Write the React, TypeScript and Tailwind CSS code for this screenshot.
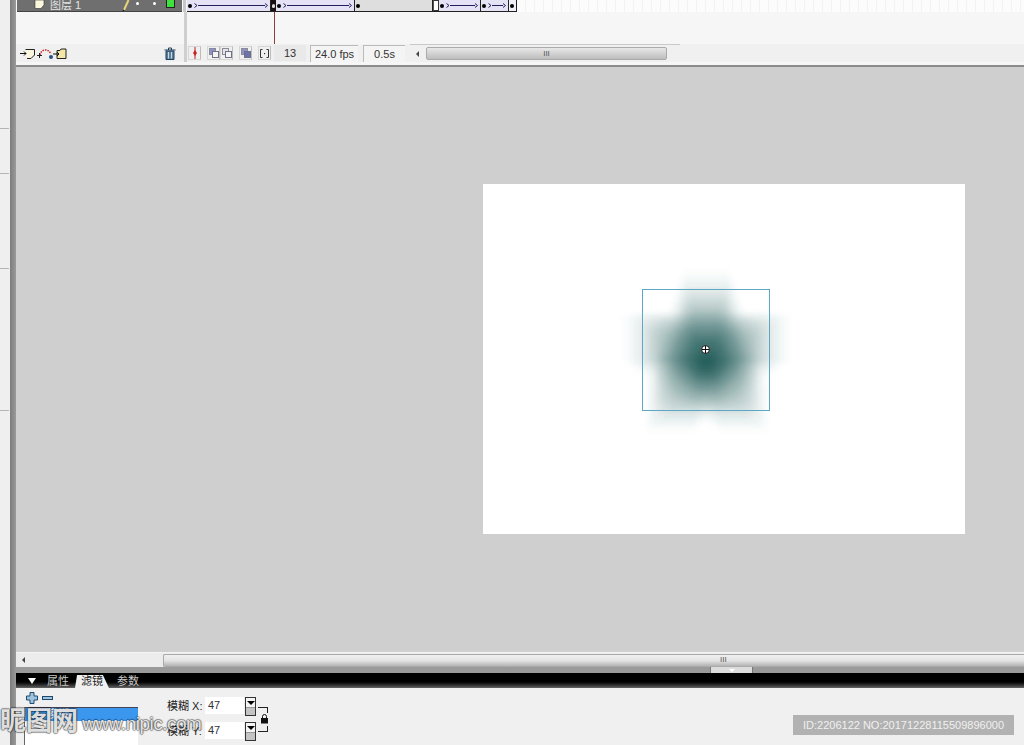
import React from "react";

const FONT = "font-['Liberation_Sans','Noto_Sans_CJK_SC',sans-serif]";

// the blurred star: box blur of a regular star, sampled into small cells
const BLUR_SIZE = 190;
const CELL = 3;
const BOX = 24;

function buildBlurCells() {
  const pts: [number, number][] = [];
  for (let i = 0; i < 10; i++) {
    const r = i % 2 === 0 ? 67 : 27;
    const a = -Math.PI / 2 + (i * Math.PI) / 5;
    pts.push([92.5 + r * Math.cos(a), 96 + r * Math.sin(a)]);
  }
  const inside = (x: number, y: number) => {
    let hit = false;
    for (let i = 0, j = pts.length - 1; i < pts.length; j = i++) {
      const [xi, yi] = pts[i];
      const [xj, yj] = pts[j];
      if (yi > y !== yj > y && x < ((xj - xi) * (y - yi)) / (yj - yi) + xi) hit = !hit;
    }
    return hit;
  };
  const n = BLUR_SIZE + 1;
  const sat = new Float32Array(n * n);
  for (let y = 1; y < n; y++) {
    for (let x = 1; x < n; x++) {
      sat[y * n + x] = (inside(x, y) ? 1 : 0) + sat[(y - 1) * n + x] + sat[y * n + x - 1] - sat[(y - 1) * n + x - 1];
    }
  }
  const cells: { x: number; y: number; o: number }[] = [];
  for (let y = 0; y < BLUR_SIZE; y += CELL) {
    for (let x = 0; x < BLUR_SIZE; x += CELL) {
      const x0 = Math.max(0, x - BOX);
      const x1 = Math.min(BLUR_SIZE, x + BOX);
      const y0 = Math.max(0, y - BOX);
      const y1 = Math.min(BLUR_SIZE, y + BOX);
      const sum = sat[y1 * n + x1] - sat[y0 * n + x1] - sat[y1 * n + x0] + sat[y0 * n + x0];
      const o = Math.pow(Math.min(1, sum / (BOX * BOX * 4)), 0.85);
      if (o > 0.004) cells.push({ x, y, o });
    }
  }
  return cells;
}

const BLUR_CELLS = buildBlurCells();

// one span in the timeline: keyframe dot, then optionally a motion arrow
const Tween = ({ w, fill = "bg-[#e4e2f4]", arrow = true }: { w: number; fill?: string; arrow?: boolean }) => (
  <div className={`h-full flex items-center shrink-0 border-r border-[#222] ${fill}`} style={{ width: w }}>
    <span className="ml-[1px] w-[4px] h-[4px] rounded-full bg-black shrink-0" />
    {arrow && (
      <>
        <svg className="ml-[2px] shrink-0" width="4" height="5" viewBox="0 0 4 5">
          <path d="M0.5 0.5L3 2.5L0.5 4.5" stroke="#20205c" fill="none" />
        </svg>
        <div className="flex-1 h-px bg-[#20205c]" />
        <svg className="mr-[2px] shrink-0" width="3" height="5" viewBox="0 0 3 5">
          <path d="M0 0.5L2.5 2.5L0 4.5" stroke="#20205c" fill="none" />
        </svg>
      </>
    )}
  </div>
);

const MiniBtn = ({ children, cls = "" }: { children: React.ReactNode; cls?: string }) => (
  <div className={`w-[13px] h-[14px] border border-[#d6d6d6] border-r-[#bdbdbd] bg-[#f0f0f0] flex items-center justify-center shrink-0 ${cls}`}>{children}</div>
);

const Onion = ({ a = "#8d93c4", b = "#f4f4f4" }: { a?: string; b?: string }) => (
  <svg width="10" height="10" viewBox="0 0 10 10">
    <rect x="0.5" y="0.5" width="6" height="6" fill={a} stroke="#8a8a9a" />
    <rect x="3.5" y="3.5" width="6" height="6" fill={b} stroke="#70708a" />
  </svg>
);

const Stepper = () => (
  <div className="ml-px w-[11px] h-[19px] border border-[#333] bg-[#c4c4c4] flex flex-col self-start shrink-0">
    <div className="h-[10px] bg-[#f4f4f4] flex items-center justify-center border-b border-[#999]">
      <span className="w-0 h-0 border-x-[4px] border-x-transparent border-t-[4px] border-t-black" />
    </div>
  </div>
);

const Field = ({ label }: { label: string }) => (
  <div className="flex items-start h-[19px]">
    <span className="w-[38px] whitespace-nowrap leading-[18px]">{label}</span>
    <div className="w-[39px] h-[17px] bg-white text-[#333] pl-[3px] leading-[17px]">47</div>
    <Stepper />
  </div>
);

export default function App() {
  return (
    <div className={`w-[1024px] h-[745px] overflow-hidden relative flex bg-[#f0f0f0] ${FONT}`}>
      {/* left strip */}
      <div className="w-[10px] shrink-0 bg-[#efefef] flex flex-col pr-px">
        <div className="h-[129px] border-b border-[#b5b5b5]" />
        <div className="h-[45px] border-b border-[#b5b5b5]" />
        <div className="h-[95px] border-b border-[#b5b5b5]" />
        <div className="h-[142px] border-b border-[#b5b5b5]" />
      </div>
      <div className="w-[6px] shrink-0 bg-gradient-to-r from-[#7d7d7d] to-[#9a9a9a]" />

      <div className="flex-1 flex flex-col min-w-0">
        {/* timeline */}
        <div className="h-[65px] bg-[#f6f6f6] flex flex-col shrink-0">
          <div className="h-[12px] flex shrink-0">
            <div className="w-[165px] ml-[1px] bg-[#6f6f6f] border-b border-[#444] flex items-start text-[11px] text-[#e4e4e4] overflow-hidden">
              <svg className="ml-[17px] shrink-0" width="11" height="9" viewBox="0 0 11 9">
                <path d="M1 0H10V5L7 8.5H1Z" fill="#fbf7dc" stroke="#333" strokeWidth="0.6" />
              </svg>
              <span className="ml-[5px] leading-[11px] w-[72px] shrink-0">图层 1</span>
              <svg className="shrink-0" width="8" height="11" viewBox="0 0 8 11">
                <path d="M6.5 0L2 10" stroke="#e6d37a" strokeWidth="2" />
                <path d="M2 10L1 11" stroke="#111" strokeWidth="1.5" />
              </svg>
              <span className="ml-[6px] mt-[2px] w-[3px] h-[3px] bg-white rounded-full shrink-0" />
              <span className="ml-[14px] mt-[2px] w-[3px] h-[3px] bg-white rounded-full shrink-0" />
              <span className="ml-[10px] w-[9px] h-[8px] bg-[#3de23d] border border-[#222] border-t-0 shrink-0" />
            </div>
            <div className="w-[3px] ml-[1px] bg-[#c8c8c8]" />
            <div className="flex-1 flex min-w-0">
              <div className="flex h-full border-b border-[#222] ml-[1px]">
                <Tween w={84} />
                <div className="w-[5px] h-full shrink-0 bg-[#1a0f0f] flex items-center justify-center">
                  <span className="w-[3px] h-[4px] rounded-full bg-[#ddd]" />
                </div>
                <Tween w={79} />
                <Tween w={78} fill="bg-[#dedede]" arrow={false} />
                <div className="w-[6px] h-full border border-[#333] border-l-[#555] bg-white shrink-0" />
                <Tween w={42} />
                <Tween w={28} />
                <Tween w={8} arrow={false} fill="bg-[#f0f0f8]" />
              </div>
              <div className="flex-1 bg-[repeating-linear-gradient(90deg,#fcfcfc_0,#fcfcfc_8px,#f2f2f2_8px,#f2f2f2_9px)]" />
            </div>
          </div>
          <div className="flex-1 flex">
            <div className="w-[168px] shrink-0" />
            <div className="w-[3px] shrink-0 bg-[#cfcfcf]" />
            <div className="flex-1 relative">
              <div className="absolute left-[87px] top-0 bottom-0 w-px bg-[#8e3c3c]" />
            </div>
          </div>
          <div className="h-[18px] mb-[3px] flex items-center shrink-0 text-[11px] text-[#333] bg-[#f0f0f0]">
            <div className="w-[168px] shrink-0 flex items-center pl-[4px]">
              <svg className="shrink-0" width="48" height="13" viewBox="0 0 48 13">
                <path d="M5.5 2.5H14.5V8L11 11.5H7" fill="#fbf7dc" stroke="#222" />
                <path d="M0 6.5H6M4 4.5l2 2-2 2" stroke="#111" fill="none" />
                <path d="M20 8C21 2 28 1 31 7" stroke="#c22" fill="none" strokeDasharray="1.5 1" strokeWidth="1.5" />
                <path d="M17 8.5H22M19.5 6V11" stroke="#222" />
                <circle cx="31" cy="10" r="2" fill="#25508a" />
                <path d="M37 3.5H40L41 2H46V11.5H37Z" fill="#f3e6a6" stroke="#222" />
                <path d="M33 7H39M37 5l2 2-2 2" stroke="#111" fill="none" />
              </svg>
              <svg className="ml-auto mr-[8px] shrink-0" width="12" height="13" viewBox="0 0 12 13">
                <path d="M0.5 3H11.5M4.5 3V1H7.5V3" stroke="#1f3f5a" fill="none" />
                <path d="M2 4H10V12.5H2Z" fill="#5c7f9a" stroke="#1f3f5a" />
                <path d="M4.5 5V11.5M7.5 5V11.5" stroke="#c9d8e4" />
              </svg>
            </div>
            <div className="w-[3px] h-full shrink-0 bg-[#cfcfcf]" />
            <MiniBtn cls="ml-[1px]">
              <svg width="6" height="12" viewBox="0 0 6 12"><path d="M3 0V12" stroke="#b02020" /><path d="M1 6L3 3L5 6L3 9Z" fill="#d02020" /></svg>
            </MiniBtn>
            <MiniBtn cls="ml-[6px]"><Onion /></MiniBtn>
            <MiniBtn cls="ml-[0px]"><Onion a="#e4e4e4" /></MiniBtn>
            <MiniBtn cls="ml-[6px]"><Onion a="#8d93c4" b="#6d72a8" /></MiniBtn>
            <MiniBtn cls="ml-[6px]">
              <svg width="9" height="9" viewBox="0 0 9 9">
                <path d="M2.5 0.5H0.5V8.5H2.5M6.5 0.5H8.5V8.5H6.5" stroke="#333" fill="none" />
                <rect x="4" y="4" width="1.2" height="1.2" fill="#333" />
              </svg>
            </MiniBtn>
            <div className="ml-[3px] w-[32px] h-[16px] bg-[#e9e9e9] text-center leading-[17px] shrink-0">13</div>
            <div className="ml-[4px] w-[48px] h-[17px] border-l border-t border-[#bbb] bg-[#f4f4f4] text-center leading-[16px] shrink-0">24.0 fps</div>
            <div className="ml-[5px] w-[42px] h-[17px] border-l border-t border-[#bbb] bg-[#f4f4f4] text-center leading-[16px] shrink-0">0.5s</div>
            <div className="ml-[5px] h-[18px] w-[270px] border-t border-[#c9c9c9] flex items-center shrink-0">
              <span className="ml-[6px] w-0 h-0 border-y-[3px] border-y-transparent border-r-[3px] border-r-[#444]" />
              <div className="ml-[7px] w-[241px] h-[13px] rounded-[2px] border border-[#aaa] bg-gradient-to-b from-[#e8e8e8] to-[#bdbdbd] flex items-center justify-center">
                <span className="text-[8px] leading-none text-[#555]">III</span>
              </div>
            </div>
          </div>
        </div>
        <div className="h-[2px] shrink-0 bg-[#8b8b8b]" />

        {/* stage */}
        <div className="flex-1 min-h-0 bg-[#cfcfcf] pl-[467px] pt-[117px]">
          <div className="w-[482px] h-[350px] bg-white pl-[159px] pt-[105px]">
            <div className="relative w-[128px] h-[122px]">
              <svg className="absolute left-[-29px] top-[-29px]" width="190" height="190" viewBox="0 0 190 190">
                <defs>
                  <filter id="soft" x="-5%" y="-5%" width="110%" height="110%">
                    <feGaussianBlur stdDeviation="2" />
                  </filter>
                </defs>
                <g filter="url(#soft)" fill="#27605d" shapeRendering="crispEdges">
                  {BLUR_CELLS.map((c) => (
                    <rect key={`${c.x}-${c.y}`} x={c.x} y={c.y} width={CELL} height={CELL} fillOpacity={c.o} />
                  ))}
                </g>
              </svg>
              <div className="absolute inset-0 border border-[#5da6c4]" />
              <svg className="absolute left-[59px] top-[56px]" width="9" height="9" viewBox="0 0 9 9">
                <circle cx="4.5" cy="4.5" r="4" fill="#fff" stroke="#111" />
                <path d="M4.5 1V8M1 4.5H8" stroke="#111" />
              </svg>
            </div>
          </div>
        </div>

        {/* horizontal scrollbar */}
        <div className="h-[15px] shrink-0 bg-[#ececec] border-t border-[#f4f4f4] flex items-center">
          <span className="ml-[6px] w-0 h-0 border-y-[3px] border-y-transparent border-r-[3px] border-r-[#444]" />
          <div className="ml-[138px] flex-1 h-[13px] rounded-l-[2px] border border-r-0 border-[#aaa] bg-gradient-to-b from-[#f0f0f0] via-[#e4e4e4] to-[#b4b4b4] flex items-center pl-[556px]">
            <span className="text-[8px] leading-none text-[#555]">III</span>
          </div>
        </div>
        <div className="h-[6px] shrink-0 bg-[#9a9a9a] pl-[694px]">
          <div className="w-[43px] h-full bg-[#dcdcdc] border-x border-[#777] flex justify-center items-end">
            <span className="mb-[1px] w-0 h-0 border-x-[3px] border-x-transparent border-t-[3px] border-t-white" />
          </div>
        </div>

        {/* tabs */}
        <div className="h-[15px] shrink-0 bg-gradient-to-b from-black from-[50%] to-[#666] flex items-end text-[11px] text-[#c8c8c8]">
          <span className="ml-[12px] mb-[4px] w-0 h-0 border-x-[4px] border-x-transparent border-t-[6px] border-t-white" />
          <span className="ml-[11px] leading-[14px]">属性</span>
          <span className="ml-[6px] w-[34px] h-[13px] bg-[#f0f0f0] text-[#222] pl-[6px] leading-[13px] [clip-path:polygon(6%_0,82%_0,100%_100%,0_100%)]">滤镜</span>
          <span className="ml-[8px] leading-[14px]">参数</span>
        </div>

        {/* filter panel */}
        <div className="h-[57px] shrink-0 flex pl-[8px] overflow-hidden">
          <div className="w-[114px] shrink-0 flex flex-col">
            <div className="h-[19px] pl-[2px] flex items-center gap-[4px] shrink-0">
              <svg width="12" height="12" viewBox="0 0 12 12">
                <path d="M4 0.5H8V4H11.5V8H8V11.5H4V8H0.5V4H4Z" fill="#9dc3de" stroke="#1c4a6e" />
              </svg>
              <span className="w-[11px] h-[4px] bg-[#9dc3de] border border-[#1c4a6e]" />
            </div>
            <div className="flex-1 bg-white border-l border-[#666]">
              <div className="h-[14px] bg-[#3b96ee] border-t border-[#445] text-white text-[11px] leading-[13px] pl-[4px] flex items-center gap-[11px]">
                <svg width="7" height="6" viewBox="0 0 7 6"><path d="M0.5 3L3 5L6.5 0.5" stroke="#2f9e55" fill="none" strokeWidth="1.2" /></svg>
                <span>模糊</span>
              </div>
            </div>
          </div>
          <div className="ml-[29px] pt-[9px] text-[11px] text-[#222] flex flex-col gap-[6px]">
            <Field label="模糊 X:" />
            <Field label="模糊 Y:" />
          </div>
          <div className="ml-[2px] mt-[19px] w-[10px] h-[25px] flex flex-col shrink-0">
            <div className="h-[6px] border-t border-r border-[#222]" />
            <svg className="ml-auto h-[13px]" width="7" height="13" viewBox="0 0 7 13">
              <rect x="0" y="5" width="7" height="5.5" fill="#111" />
              <path d="M1.5 5.5V3.5A2 2 0 0 1 5.5 3.5V5.5" stroke="#111" fill="none" />
            </svg>
            <div className="h-[6px] border-b border-r border-[#222]" />
          </div>
        </div>
      </div>

      {/* watermarks */}
      <div className="absolute left-0 top-[706px] text-[26px] leading-[30px] font-bold text-white/85 whitespace-nowrap [text-shadow:1px_0_1px_rgba(0,0,0,0.4),-1px_0_1px_rgba(0,0,0,0.4),0_1px_1px_rgba(0,0,0,0.4),0_-1px_1px_rgba(0,0,0,0.4)]">
        昵图网 <span className="ml-[-3px] text-[19px] font-normal tracking-[-0.5px]">www.nipic.com</span>
      </div>
      <div className="absolute left-[793px] top-[715px] w-[221px] h-[20px] bg-[#b2b2b2] text-[#f0f0f0] text-[11px] leading-[20px] text-center">
        ID:2206122 NO:20171228115509896000
      </div>
    </div>
  );
}
